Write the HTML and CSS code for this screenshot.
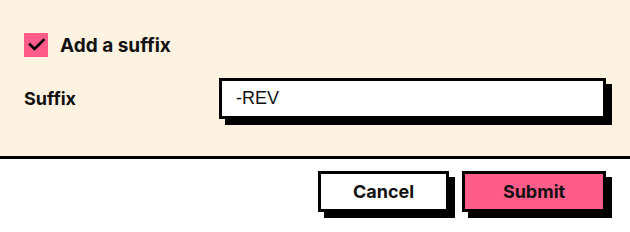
FILE: index.html
```html
<!DOCTYPE html>
<html lang="en">
<head>
    <meta charset="UTF-8">
    <title>Add a suffix</title>
    <link rel="stylesheet" href="styles.css">
</head>
<body>
    <div class="dialog">
        <section class="panel">
            <label class="check-row">
                <span class="checkbox">
                    <svg width="24" height="24" viewBox="0 0 24 24">
                        <polyline points="6,11.5 10.5,16 19.5,7" fill="none" stroke="#000" stroke-width="2.6" stroke-linecap="square"/>
                    </svg>
                </span>
                <span class="check-label">Add a suffix</span>
            </label>

            <div class="field-row">
                <label class="field-label" for="suffix">Suffix</label>
                <input type="text" id="suffix" value="-REV">
            </div>
        </section>

        <footer class="actions">
            <button class="btn cancel-btn">Cancel</button>
            <button class="btn submit-btn">Submit</button>
        </footer>
    </div>
</body>
</html>
```

FILE: styles.css
```css
:root {
    --cream: #fef3e0;
    --pink: #ff5c8a;
    --ink: #000;
}

* {
    box-sizing: border-box;
    margin: 0;
    padding: 0;
}

body {
    background: #fff;
    color: #111;
    font-family: 'Inter', 'Noto Sans', sans-serif;
}

.panel {
    background: var(--cream);
    height: 159px;
    padding: 33px 24px 0 24px;
    border-bottom: 3px solid var(--ink);
}

.check-row {
    display: flex;
    align-items: center;
    gap: 12px;
}

.checkbox {
    width: 24px;
    height: 24px;
    background: var(--pink);
    display: block;
}

.checkbox svg {
    display: block;
}

.check-label {
    font-size: 19px;
    font-weight: 700;
}

.field-row {
    display: flex;
    align-items: center;
    margin-top: 21px;
}

.field-label {
    width: 195px;
    font-size: 18px;
    font-weight: 700;
}

input {
    flex: 1;
    height: 41px;
    border: 3px solid var(--ink);
    background: #fff;
    box-shadow: 6px 6px 0 var(--ink);
    padding: 0 14px;
    font-family: 'Liberation Sans', Arial, sans-serif;
    font-size: 18px;
    color: #111;
    outline: none;
}

.actions {
    display: flex;
    justify-content: flex-end;
    gap: 13px;
    padding: 12px 24px;
}

.btn {
    height: 41px;
    border: 3px solid var(--ink);
    box-shadow: 6px 6px 0 var(--ink);
    font-family: 'Inter', 'Noto Sans', sans-serif;
    font-size: 18px;
    font-weight: 700;
    color: #111;
    cursor: pointer;
}

.cancel-btn {
    width: 131px;
    background: #fff;
}

.submit-btn {
    width: 144px;
    background: var(--pink);
}
```
